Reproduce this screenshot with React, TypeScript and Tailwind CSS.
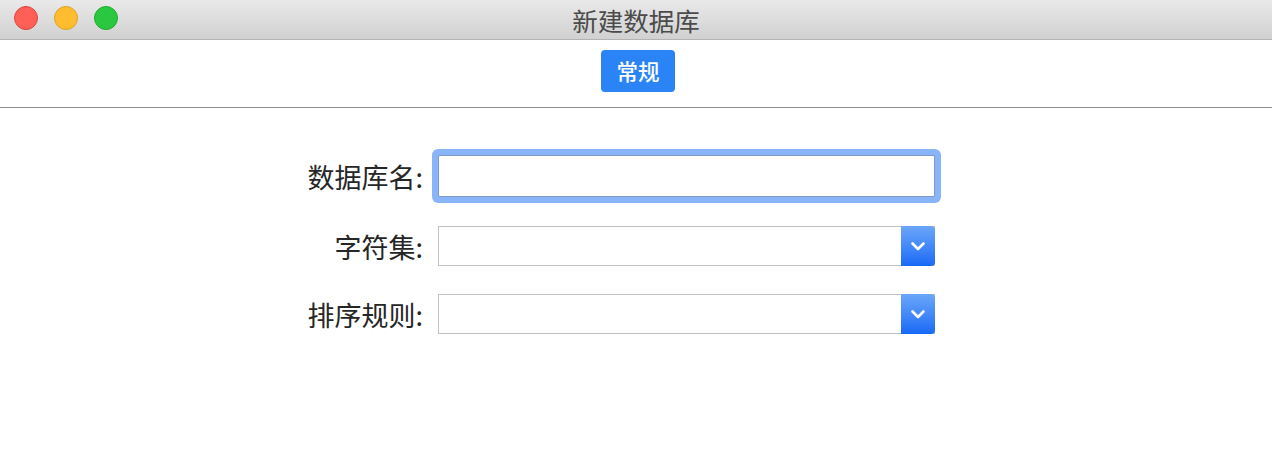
import React from "react";

const font = { fontFamily: '"Noto Sans CJK SC", "Noto Sans", sans-serif' };

function Chevron() {
  return (
    <svg width="16" height="10" viewBox="0 0 16 10" fill="none">
      <path d="M2.5 2.5 L8 8 L13.5 2.5" stroke="white" strokeWidth="2.6" strokeLinecap="round" strokeLinejoin="round" />
    </svg>
  );
}

function SelectBox() {
  return (
    <div className="flex h-[40px] w-[497px] border border-[#c2c2c2] bg-white">
      <div className="flex-1" />
      <div className="-my-[1px] -mr-[1px] flex w-[34px] items-center justify-center rounded-r-[4px] bg-gradient-to-b from-[#6ba6f9] to-[#1769f6]">
        <Chevron />
      </div>
    </div>
  );
}

export default function App() {
  return (
    <div className="h-[452px] w-[1272px] overflow-hidden bg-white" style={font}>
      {/* Title bar */}
      <div className="relative flex h-[40px] items-center justify-center border-b border-[#b3b3b3] bg-gradient-to-b from-[#e9e9e9] to-[#d1d1d1]">
        <div className="absolute left-[14px] top-[6px] flex gap-[16px]">
          <div className="h-[24px] w-[24px] rounded-full border border-[#e0463f] bg-[#fe5f57]" />
          <div className="h-[24px] w-[24px] rounded-full border border-[#dea226] bg-[#febc2e]" />
          <div className="h-[24px] w-[24px] rounded-full border border-[#1fac2d] bg-[#2ac840]" />
        </div>
        <span className="text-[25.5px] leading-none text-[#4b4b4b]">新建数据库</span>
      </div>

      {/* Tab area */}
      <div className="flex h-[68px] justify-center border-b border-[#8e8e8e] pl-[4px] pt-[10px]">
        <div className="flex h-[42px] w-[74px] items-center justify-center rounded-[4px] bg-[#2b84f6] text-[21.5px] font-medium leading-none text-white">
          常规
        </div>
      </div>

      {/* Form */}
      <div className="grid grid-cols-[423px_497px] gap-x-[15px] pt-[47px]">
        <div className="flex h-[42px] items-center justify-end text-[27px] leading-none text-[#262626]">数据库名:</div>
        <div className="h-[42px] rounded-[2px] border border-[#7d9ac8] bg-white shadow-[0_0_0_6px_#89b4f7]" />

        <div className="mt-[29px] flex h-[40px] items-center justify-end text-[27px] leading-none text-[#262626]">字符集:</div>
        <div className="mt-[29px]">
          <SelectBox />
        </div>

        <div className="mt-[28px] flex h-[40px] items-center justify-end text-[27px] leading-none text-[#262626]">排序规则:</div>
        <div className="mt-[28px]">
          <SelectBox />
        </div>
      </div>
    </div>
  );
}
